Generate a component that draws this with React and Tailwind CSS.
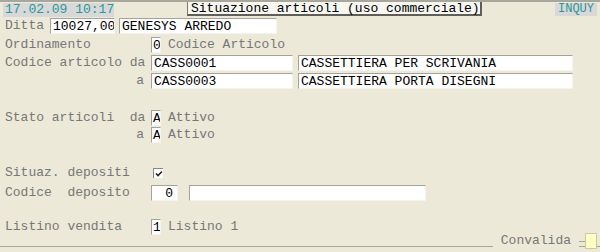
const MONO = "font-['Liberation_Mono','Courier_New',monospace]";

function Field({ children, className = "" }) {
  return (
    <div
      className={`h-[16px] bg-white border-t border-l border-[#a5a398] border-r border-b border-r-[#f4f3ee] border-b-[#f4f3ee] text-black leading-[15px] pl-[2px] whitespace-pre overflow-hidden ${className}`}
    >
      {children}
    </div>
  );
}

function Label({ children, className = "" }) {
  return <div className={`whitespace-pre text-[#777] leading-[16px] ${className}`}>{children}</div>;
}

export default function App() {
  return (
    <div className={`relative w-[600px] h-[252px] overflow-hidden bg-[#ece9d8] text-[13px] ${MONO}`}>
      {/* header */}
      <div className="flex items-start h-[17px] border-t-2 border-[#a9a79c]">
        <div className="ml-[3px] mt-[1px] w-[111px] h-[14px] bg-[#d8d8d8] text-[#2b9898] leading-[14px] pl-[2px] whitespace-pre">
          17.02.09 10:17
        </div>
        <div className="ml-[73px] w-[295px] h-[14px] bg-[#f7f7f2] border-l border-[#7a7a72] border-b-2 border-r-2 border-b-[#5f5e58] border-r-[#5f5e58] text-black leading-[13px] pl-[3px] whitespace-pre">
          Situazione articoli (uso commerciale)
        </div>
        <div className="ml-auto mr-[3px] mt-[1px] w-[42px] h-[13px] bg-[#d8d8d8] text-[#2b9898] text-[12px] leading-[13px] text-center">
          INQUY
        </div>
      </div>

      {/* Ditta */}
      <div className="flex items-center mt-[1px] pl-[5px]">
        <Label className="w-[45px]">Ditta</Label>
        <Field className="w-[65px]">10027,00</Field>
        <Field className="ml-[4px] w-[158px]">GENESYS ARREDO</Field>
      </div>

      {/* Ordinamento */}
      <div className="flex items-center mt-[3px] pl-[5px]">
        <Label className="w-[146px]">Ordinamento</Label>
        <Field className="w-[10px] !pl-[1px]">0</Field>
        <Label className="ml-[7px]">Codice Articolo</Label>
      </div>

      {/* Codice articolo */}
      <div className="flex items-center mt-[2px] pl-[5px]">
        <Label className="w-[146px]">Codice articolo da</Label>
        <Field className="w-[142px]">CASS0001</Field>
        <Field className="ml-[5px] w-[275px]">CASSETTIERA PER SCRIVANIA</Field>
      </div>
      <div className="flex items-center mt-[2px] pl-[5px]">
        <Label className="w-[146px] text-right pr-[7px]">a</Label>
        <Field className="w-[142px]">CASS0003</Field>
        <Field className="ml-[5px] w-[275px]">CASSETTIERA PORTA DISEGNI</Field>
      </div>

      {/* Stato articoli */}
      <div className="flex items-center mt-[21px] pl-[5px]">
        <Label className="w-[146px]">Stato articoli  da</Label>
        <Field className="w-[10px] !pl-[1px]">A</Field>
        <Label className="ml-[7px]">Attivo</Label>
      </div>
      <div className="flex items-center mt-[1px] pl-[5px]">
        <Label className="w-[146px] text-right pr-[7px]">a</Label>
        <Field className="w-[10px] !pl-[1px]">A</Field>
        <Label className="ml-[7px]">Attivo</Label>
      </div>

      {/* Situaz. depositi */}
      <div className="flex items-center mt-[22px] pl-[5px]">
        <Label className="w-[148px]">Situaz. depositi</Label>
        <div className="w-[10px] h-[10px] bg-white border-t border-l border-[#8c8a80] flex items-center justify-center">
          <svg width="8" height="8" viewBox="0 0 8 8">
            <path d="M1 3.5 L3 5.5 L7 1.5" stroke="#222" strokeWidth="1.6" fill="none" />
          </svg>
        </div>
      </div>

      {/* Codice deposito */}
      <div className="flex items-center mt-[4px] pl-[5px]">
        <Label className="w-[146px]">Codice  deposito</Label>
        <Field className="w-[27px] text-right !pl-0 pr-[4px]">0</Field>
        <Field className="ml-[11px] w-[237px]">{""}</Field>
      </div>

      {/* Listino vendita */}
      <div className="flex items-center mt-[18px] pl-[5px]">
        <Label className="w-[146px]">Listino vendita</Label>
        <Field className="w-[10px] !pl-[1px]">1</Field>
        <Label className="ml-[7px]">Listino 1</Label>
      </div>

      {/* footer line */}
      <div className="mt-[11px] h-[1px] bg-[#a9a79c]" />
      <div className="absolute right-[3px] top-[233px] flex items-center">
        <Label className="bg-[#ece9d8] px-[8px]">Convalida</Label>
        <div className="w-[6px] h-[1px] bg-[#a9a79c]" />
        <div className="w-[12px] h-[16px] bg-[#ffffc0] border border-[#c9c7b0]" />
      </div>
    </div>
  );
}
